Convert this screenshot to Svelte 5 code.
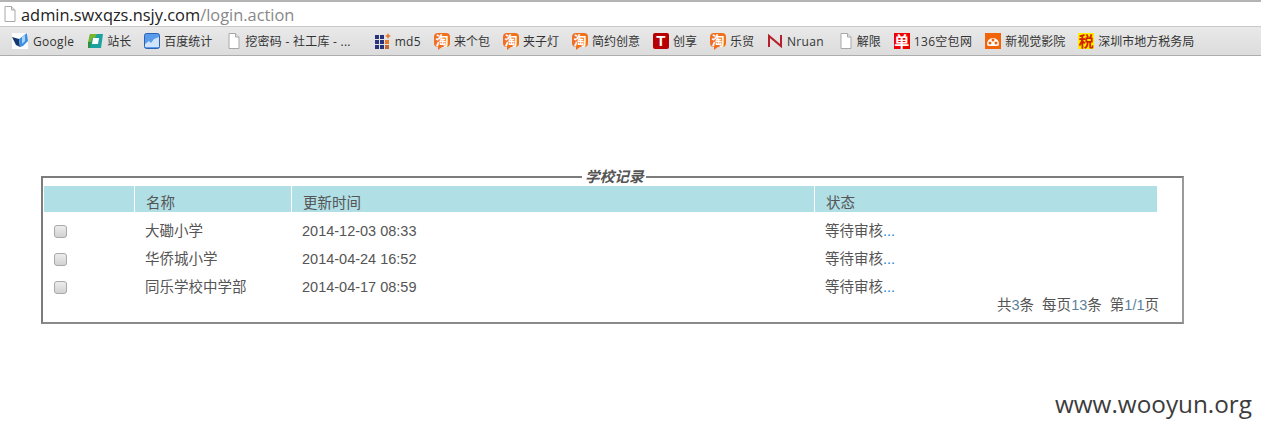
<script>
  const bookmarks = [
    { icon: 'butterfly', label: 'Google', cls: 'latin first' },
    { icon: 'zhanzhang', label: '站长' },
    { icon: 'chart', label: '百度统计' },
    { icon: 'page', label: '挖密码 - 社工库 - ...', cls: 'truncated' },
    { icon: 'grid', label: 'md5', cls: 'latin' },
    { icon: 'tao', label: '来个包' },
    { icon: 'tao', label: '夹子灯' },
    { icon: 'tao', label: '简约创意' },
    { icon: 't', label: '创享' },
    { icon: 'tao', label: '乐贸' },
    { icon: 'n', label: 'Nruan', cls: 'latin' },
    { icon: 'page', label: '解限' },
    { icon: 'dan', label: '136空包网', cls: 'latin' },
    { icon: 'film', label: '新视觉影院' },
    { icon: 'tax', label: '深圳市地方税务局' }
  ];

  const rows = [
    { name: '大磡小学', time: '2014-12-03 08:33' },
    { name: '华侨城小学', time: '2014-04-24 16:52' },
    { name: '同乐学校中学部', time: '2014-04-17 08:59' }
  ];
</script>

{#snippet pageIcon()}
  <svg class="ico page" viewBox="0 0 13 16" fill="#fff" stroke="#a8a8a8">
    <path d="M1.500 .5h6.500l3.500 3.500v11.500h-10z" />
    <path d="M8 .5v3.500h3.500" fill="#e4e4e4" />
  </svg>
{/snippet}

{#snippet icon(name)}
  {#if name === 'butterfly'}
    <svg class="ico" viewBox="0 0 16 16">
      <rect width="16" height="16" fill="#fff" />
      <path d="M0 4l7 2 1 8-4-2z" fill="#16386f" />
      <path d="M15 0l1 8-5 5-3 1-1-8z" fill="#3f8fe0" />
      <path d="M10 4l3-2v6l-3 3z" fill="#a9d6f5" />
    </svg>
  {:else if name === 'zhanzhang'}
    <svg class="ico" viewBox="0 0 16 16">
      <path d="M3 1h13l-2 14H1z" fill="#1aa2a0" />
      <path d="M1 9l2-8h7L8 5H5l-1 4z" fill="#79b52a" />
      <path d="M1 9h3l-1 6H1z" fill="#2f8f3a" />
      <path d="M6 5h6l-1 6H5z" fill="#fff" />
    </svg>
  {:else if name === 'chart'}
    <svg class="ico" viewBox="0 0 16 16">
      <rect x=".5" y=".5" width="15" height="15" rx="2" fill="#5a9bea" stroke="#2a62b8" />
      <path d="M1 11l4-3 2 2 3-4 5-2v10H1z" fill="#cfe3fb" />
    </svg>
  {:else if name === 'page'}
    {@render pageIcon()}
  {:else if name === 'grid'}
    <svg class="ico" viewBox="0 0 16 16">
      <g fill="#26347c">
        <rect x="0" y="2" width="4" height="4" /><rect x="5" y="2" width="4" height="4" />
        <rect x="0" y="7" width="4" height="4" /><rect x="5" y="7" width="4" height="4" />
        <rect x="0" y="12" width="4" height="4" /><rect x="5" y="12" width="4" height="4" />
      </g>
      <rect x="10" y="7" width="4" height="4" fill="#e8792c" />
      <rect x="10" y="12" width="4" height="4" fill="#c2662f" />
      <path d="M13 0l1 2 2 1-2 1-1 2-1-2-2-1 2-1z" fill="#e8792c" />
    </svg>
  {:else if name === 'tao'}
    <span class="ico tao"><span>淘</span></span>
  {:else if name === 't'}
    <span class="ico tee">T</span>
  {:else if name === 'n'}
    <svg class="ico" viewBox="0 0 16 16" fill="none" stroke="#b5202c" stroke-width="2">
      <path d="M2 14V3l12 10V2" />
    </svg>
  {:else if name === 'dan'}
    <span class="ico dan">单</span>
  {:else if name === 'film'}
    <svg class="ico" viewBox="0 0 16 16">
      <rect width="16" height="16" fill="#f2640a" />
      <path d="M2 11a6 6 0 0 1 12 0 2 2 0 0 1-2 2H4a2 2 0 0 1-2-2z" fill="#fff" />
      <circle cx="5" cy="10" r="1.500" fill="#f2640a" />
      <circle cx="8" cy="7" r="1.500" fill="#f2640a" />
      <circle cx="11" cy="10" r="1.500" fill="#f2640a" />
    </svg>
  {:else if name === 'tax'}
    <span class="ico tax">税</span>
  {/if}
{/snippet}

<div class="page-wrap">
  <div class="address">
    {@render pageIcon()}
    <span class="url">admin.swxqzs.nsjy.com<span class="path">/login.action</span></span>
  </div>

  <nav class="bookmarks">
    {#each bookmarks as b}
      <span class="bookmark {b.cls ?? ''}">
        {@render icon(b.icon)}
        <span>{b.label}</span>
      </span>
    {/each}
  </nav>

  <main class="content">
    <fieldset class="records">
      <legend>学校记录</legend>
      <div class="grid head">
        <div></div>
        <div>名称</div>
        <div>更新时间</div>
        <div>状态</div>
      </div>
      <div class="rows">
        {#each rows as row}
          <div class="grid row">
            <div><input type="checkbox" /></div>
            <div>{row.name}</div>
            <div>{row.time}</div>
            <div>等待审核<span class="more">...</span></div>
          </div>
        {/each}
      </div>
      <div class="pager">
        共<b>3</b>条&nbsp;&nbsp;每页<b>13</b>条&nbsp;&nbsp;第<b>1/1</b>页
      </div>
    </fieldset>
  </main>

  <div class="watermark">www.wooyun.org</div>
</div>

<style>
  :global(body) {
    margin: 0;
    background: #fff;
  }

  .page-wrap {
    height: 434px;
    overflow: hidden;
    display: flex;
    flex-direction: column;
    font-family: "Liberation Sans", "Noto Sans CJK SC", sans-serif;
  }

  .address {
    box-sizing: border-box;
    height: 27px;
    display: flex;
    align-items: center;
    gap: 4px;
    padding-left: 3px;
    border-top: 2px solid #b4b4b4;
    border-bottom: 1px solid #c8c8c8;
  }

  .url {
    font-family: "Open Sans", "Noto Sans", sans-serif;
    font-size: 16.4px;
    color: #222;
  }

  .path {
    color: #888;
  }

  .bookmarks {
    box-sizing: border-box;
    height: 29px;
    display: flex;
    align-items: center;
    gap: 13px;
    padding-left: 12px;
    background: linear-gradient(#e9e9e9, #dcdcdc);
    border-bottom: 1px solid #adadad;
    font-family: "Open Sans", "Noto Sans CJK SC", sans-serif;
    font-size: 12px;
    color: #333;
    white-space: nowrap;
  }

  .bookmark {
    display: flex;
    align-items: center;
    gap: 4px;
  }

  .bookmark.first {
    gap: 5px;
  }

  .bookmark.latin {
    letter-spacing: .3px;
  }

  .bookmark.truncated {
    letter-spacing: .25px;
    margin-right: 11px;
  }

  .ico {
    width: 16px;
    height: 16px;
    flex-shrink: 0;
    display: block;
  }

  .ico.page {
    width: 14px;
    height: 16px;
  }

  .bookmark .ico.page {
    margin-left: 2px;
  }

  .tao,
  .tee,
  .dan,
  .tax {
    display: flex;
    align-items: center;
    justify-content: center;
    font-family: "Noto Sans CJK SC", sans-serif;
    font-weight: 700;
    font-size: 15px;
    line-height: 16px;
    letter-spacing: 0;
  }

  .tao {
    position: relative;
    height: 14px;
    margin-bottom: 2px;
    background: #f0701e;
    color: #fff;
    border-radius: 4px;
    font-size: 13px;
  }

  /* bubble tail */
  .tao::after {
    content: "";
    position: absolute;
    left: 4px;
    bottom: -3px;
    border-top: 3px solid #f0701e;
    border-right: 4px solid transparent;
  }

  .tee {
    background: #b80000;
    color: #fff;
    border-radius: 2px;
    font-family: "Liberation Sans", sans-serif;
  }

  .dan {
    background: #f00000;
    color: #fff;
  }

  .tax {
    background: #ffee00;
    color: #d42000;
  }

  .content {
    padding: 114px 0 0 41px;
  }

  .records {
    box-sizing: border-box;
    width: 1143px;
    height: 154px;
    margin: 0;
    padding: 2px 25px 0 1px;
    border: 2px solid #7c7c7c;
    border-right-color: #9a9a9a;
    border-bottom-color: #8a8a8a;
    color: #555;
    font-size: 14.5px;
  }

  legend {
    margin: 0 0 0 538px;
    padding: 0 2px 0 3px;
    font-weight: 700;
    font-style: italic;
    font-size: 14.67px;
    line-height: 14px;
    color: #555;
  }

  .grid {
    display: grid;
    grid-template-columns: 90px 157px 523px 1fr;
  }

  .grid > div {
    padding-left: 11px;
    display: flex;
    align-items: center;
  }

  .grid > div:first-child {
    padding-left: 10px;
  }

  .head {
    grid-template-rows: 26px;
    line-height: 17px;
  }

  .head > div {
    background: #b0dfe5;
    border-left: 1px solid #fff;
    box-sizing: border-box;
    padding-left: 11px;
    padding-top: 9px;
  }

  .head > div:first-child {
    border-left: 0;
  }

  .rows {
    padding-top: 5px;
  }

  .row {
    grid-template-rows: 28px;
    line-height: 20px;
  }

  input[type="checkbox"] {
    appearance: none;
    box-sizing: border-box;
    width: 13px;
    height: 13px;
    margin: 0;
    border: 1px solid #a8a8a8;
    border-radius: 3px;
    background: linear-gradient(#ececec, #d2d2d2);
  }

  .more {
    color: #1e7fd0;
  }

  .pager {
    margin: -4px -2px 0 0;
    text-align: right;
    line-height: 16px;
  }

  .pager b {
    font-weight: 400;
    color: #5a7f9f;
  }

  .watermark {
    margin: auto 9px 14px 0;
    align-self: flex-end;
    font-family: "Open Sans", sans-serif;
    font-size: 24.3px;
    line-height: 33px;
    color: #3c3c3c;
  }
</style>
